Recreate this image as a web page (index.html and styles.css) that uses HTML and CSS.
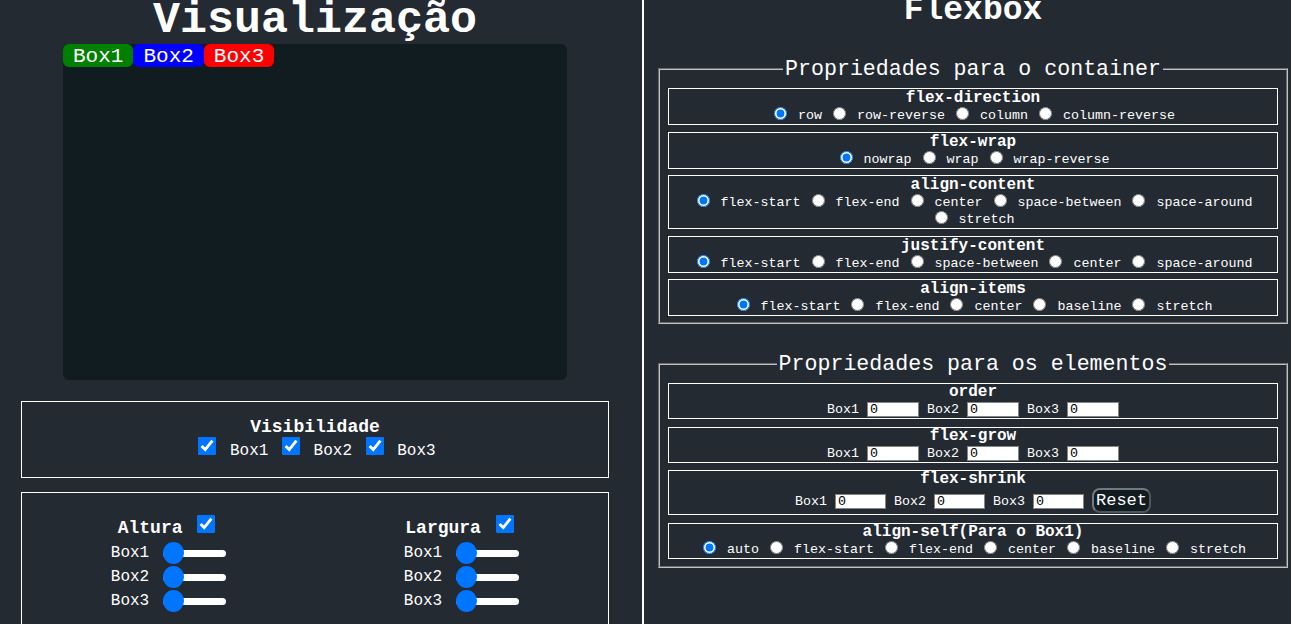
FILE: index.html
```html
<!DOCTYPE html>
<html lang="pt-BR">
<head>
<meta charset="utf-8">
<title>Flexbox</title>
<link rel="stylesheet" href="styles.css">
</head>
<body>
<div class="page">
  <div class="left">
    <h1 class="main-title">Visualização</h1>
    <div class="canvas">
      <div class="box b1">Box1</div>
      <div class="box b2">Box2</div>
      <div class="box b3">Box3</div>
    </div>
    <div class="panel vis">
      <div class="panel-title">Visibilidade</div>
      <div class="vis-row"><input type="checkbox" class="chk" checked> Box1 <input type="checkbox" class="chk" checked> Box2 <input type="checkbox" class="chk" checked> Box3</div>
    </div>
    <div class="panel sizes">
      <div class="size-col">
        <div class="size-head">Altura <input type="checkbox" class="chk" checked></div>
        <div class="size-row"><span>Box1</span><input type="range" class="slider" min="0" max="100" value="0"></div>
        <div class="size-row"><span>Box2</span><input type="range" class="slider" min="0" max="100" value="0"></div>
        <div class="size-row"><span>Box3</span><input type="range" class="slider" min="0" max="100" value="0"></div>
      </div>
      <div class="size-col">
        <div class="size-head">Largura <input type="checkbox" class="chk" checked></div>
        <div class="size-row"><span>Box1</span><input type="range" class="slider" min="0" max="100" value="0"></div>
        <div class="size-row"><span>Box2</span><input type="range" class="slider" min="0" max="100" value="0"></div>
        <div class="size-row"><span>Box3</span><input type="range" class="slider" min="0" max="100" value="0"></div>
      </div>
    </div>
  </div>
  <div class="right">
    <h2 class="side-title">Flexbox</h2>
    <fieldset class="group">
      <legend class="group-legend">Propriedades para o container</legend>
      <div class="prop">
        <div class="prop-title">flex-direction</div>
        <div class="opts"><span class="opt"><input type="radio" name="fd" checked> <label>row</label></span> <span class="opt"><input type="radio" name="fd"> <label>row-reverse</label></span> <span class="opt"><input type="radio" name="fd"> <label>column</label></span> <span class="opt"><input type="radio" name="fd"> <label>column-reverse</label></span></div>
      </div>
      <div class="prop">
        <div class="prop-title">flex-wrap</div>
        <div class="opts"><span class="opt"><input type="radio" name="fw" checked> <label>nowrap</label></span> <span class="opt"><input type="radio" name="fw"> <label>wrap</label></span> <span class="opt"><input type="radio" name="fw"> <label>wrap-reverse</label></span></div>
      </div>
      <div class="prop">
        <div class="prop-title">align-content</div>
        <div class="opts"><span class="opt"><input type="radio" name="ac" checked> <label>flex-start</label></span> <span class="opt"><input type="radio" name="ac"> <label>flex-end</label></span> <span class="opt"><input type="radio" name="ac"> <label>center</label></span> <span class="opt"><input type="radio" name="ac"> <label>space-between</label></span> <span class="opt"><input type="radio" name="ac"> <label>space-around</label></span> <span class="opt"><input type="radio" name="ac"> <label>stretch</label></span></div>
      </div>
      <div class="prop">
        <div class="prop-title">justify-content</div>
        <div class="opts"><span class="opt"><input type="radio" name="jc" checked> <label>flex-start</label></span> <span class="opt"><input type="radio" name="jc"> <label>flex-end</label></span> <span class="opt"><input type="radio" name="jc"> <label>space-between</label></span> <span class="opt"><input type="radio" name="jc"> <label>center</label></span> <span class="opt"><input type="radio" name="jc"> <label>space-around</label></span></div>
      </div>
      <div class="prop">
        <div class="prop-title">align-items</div>
        <div class="opts"><span class="opt"><input type="radio" name="ai" checked> <label>flex-start</label></span> <span class="opt"><input type="radio" name="ai"> <label>flex-end</label></span> <span class="opt"><input type="radio" name="ai"> <label>center</label></span> <span class="opt"><input type="radio" name="ai"> <label>baseline</label></span> <span class="opt"><input type="radio" name="ai"> <label>stretch</label></span></div>
      </div>
    </fieldset>
    <fieldset class="group group2">
      <legend class="group-legend">Propriedades para os elementos</legend>
      <div class="prop">
        <div class="prop-title">order</div>
        <div class="opts"><label>Box1</label> <input type="text" class="num" value="0"> <label>Box2</label> <input type="text" class="num" value="0"> <label>Box3</label> <input type="text" class="num" value="0"></div>
      </div>
      <div class="prop">
        <div class="prop-title">flex-grow</div>
        <div class="opts"><label>Box1</label> <input type="text" class="num" value="0"> <label>Box2</label> <input type="text" class="num" value="0"> <label>Box3</label> <input type="text" class="num" value="0"></div>
      </div>
      <div class="prop">
        <div class="prop-title">flex-shrink</div>
        <div class="opts opts-tall"><label>Box1</label> <input type="text" class="num" value="0"> <label>Box2</label> <input type="text" class="num" value="0"> <label>Box3</label> <input type="text" class="num" value="0"> <button class="reset">Reset</button></div>
      </div>
      <div class="prop">
        <div class="prop-title">align-self(Para o Box1)</div>
        <div class="opts"><span class="opt"><input type="radio" name="as" checked> <label>auto</label></span> <span class="opt"><input type="radio" name="as"> <label>flex-start</label></span> <span class="opt"><input type="radio" name="as"> <label>flex-end</label></span> <span class="opt"><input type="radio" name="as"> <label>center</label></span> <span class="opt"><input type="radio" name="as"> <label>baseline</label></span> <span class="opt"><input type="radio" name="as"> <label>stretch</label></span></div>
      </div>
    </fieldset>
  </div>
</div>
</body>
</html>
```
FILE: styles.css
```css
html, body {
  margin: 0;
  padding: 0;
  background: #242a32;
  overflow: hidden;
}
body {
  font-family: "Liberation Mono", "Courier New", monospace;
  color: #fff;
}
.page {
  display: flex;
  align-items: stretch;
  min-height: 640px;
}
.left {
  width: 630px;
  flex-shrink: 0;
  margin-right: 12px;
}
.right {
  width: 658px;
  flex-shrink: 0;
  border-left: 2px solid #fff;
}
.main-title {
  margin: 0 0 2px;
  font-size: 45px;
  font-weight: bold;
  text-align: center;
  line-height: 42px;
}
.canvas {
  margin: 0 auto;
  width: 504px;
  height: 336px;
  background: #111c21;
  border-radius: 6px;
  display: flex;
  align-items: flex-start;
}
.box {
  font-size: 21px;
  line-height: 21px;
  padding: 2px 10px 0;
  border-radius: 6px;
  color: #fff;
}
.b1 { background: #008000; }
.b2 { background: #0000ff; }
.b3 { background: #ff0000; }
.panel {
  border: 1px solid #fff;
  margin: 0 21px;
}
.vis {
  margin-top: 21px;
  padding: 15px 15px 17px;
  text-align: center;
  font-size: 16px;
}
.panel-title {
  font-size: 18px;
  font-weight: bold;
}
.chk {
  width: 18px;
  height: 18px;
  margin: 0 4px;
}
.sizes {
  margin-top: 14px;
  padding: 22px 0 30px;
  display: grid;
  grid-template-columns: 1fr 1fr;
}
.size-col {
  display: flex;
  flex-direction: column;
  align-items: center;
}
.size-head {
  font-size: 18px;
  font-weight: bold;
  margin-bottom: 3px;
}
.size-row {
  height: 24px;
  display: flex;
  align-items: center;
  gap: 14px;
  font-size: 16px;
}
.slider {
  -webkit-appearance: none;
  appearance: none;
  width: 63px;
  height: 22px;
  margin: 0;
  background: transparent;
}
.slider::-webkit-slider-runnable-track {
  height: 7px;
  background: #fff;
  border-radius: 4px;
}
.slider::-webkit-slider-thumb {
  -webkit-appearance: none;
  appearance: none;
  width: 21px;
  height: 22px;
  border-radius: 50%;
  background: #0075ff;
  margin-top: -7.5px;
}
.side-title {
  margin: 0 0 34.6px;
  font-size: 33px;
  font-weight: bold;
  text-align: center;
  line-height: 22.4px;
}
.group {
  margin: 0 14px;
  padding: 7px 8px 6px;
  border: 2px groove #c0c0c0;
  display: flex;
  flex-direction: column;
  gap: 6.5px;
}
.group2 {
  margin-top: 28px;
  padding-bottom: 7.5px;
  gap: 7.5px;
}
.group2 .prop-title {
  line-height: 17px;
}
.group-legend {
  margin: 0 auto;
  padding: 0 2px;
  font-size: 21.6px;
  line-height: normal;
}
.prop {
  border: 1px solid #fff;
  text-align: center;
}
.prop-title {
  font-size: 16px;
  font-weight: bold;
  line-height: 18px;
}
.opts {
  font-size: 13.33px;
  line-height: 17px;
}
.opt {
  white-space: nowrap;
}
.opts input[type="radio"] {
  margin: 0 3px;
  vertical-align: -1px;
}
.opts-tall {
  line-height: 25px;
}
.num {
  box-sizing: border-box;
  width: 52px;
  height: 15px;
  padding: 0 2px;
  margin: 0;
  border: 1px solid #858585;
  background: #fff;
  color: #000;
  font-family: "Liberation Mono", monospace;
  font-size: 13.33px;
}
.opts-tall .num {
  width: 51px;
}
.reset {
  font-family: "Liberation Mono", monospace;
  font-size: 17px;
  line-height: normal;
  padding: 1px 2px;
  color: #fff;
  background: #101c20;
  border: 2px solid #51565b;
  border-top-color: #74797e;
  border-left-color: #74797e;
  border-radius: 8px;
  margin: 0;
}
```
